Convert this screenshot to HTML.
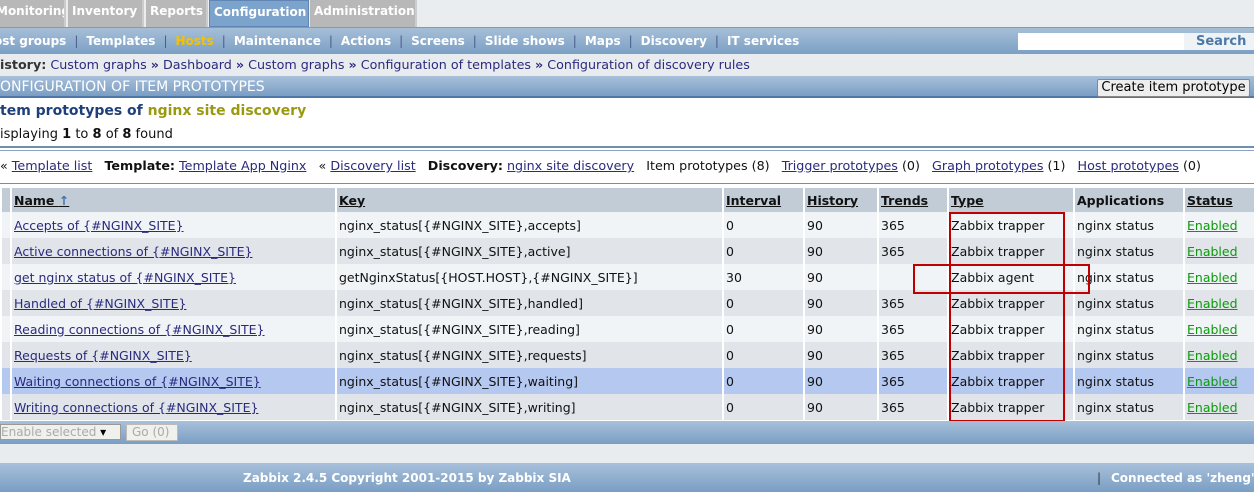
<!DOCTYPE html>
<html><head><style>
*{margin:0;padding:0;box-sizing:border-box}
body{width:1254px;height:492px;overflow:hidden;background:#fff;font-family:"DejaVu Sans","Liberation Sans",sans-serif;font-size:12px;color:#111;position:relative}
.abs{position:absolute;white-space:nowrap}
a{color:#2a2a7e;text-decoration:underline}
.tabs{top:0;left:0;width:1254px;height:27px;background:#eaedf0}
.tab{position:absolute;top:0;height:27px;background:#b8b8b8;color:#fff;font-weight:bold;font-size:12px;line-height:23px;padding-left:4px;border-right:2px solid #ccc;overflow:hidden}
.sub{top:27px;left:0;width:1254px;height:27px;background:linear-gradient(#a6bfd8,#7b9fc4);border-top:1px solid #7d9cbd;color:#fff;font-weight:bold;font-size:12px;line-height:26px}
.sub span{margin:0 4px}
.sep{color:#4a5c8a;font-weight:normal}
.hist{top:54px;left:0;width:1254px;height:22px;background:#e9ecef;line-height:22px;font-size:12.7px;color:#2a2a7e}
.ttl{top:76px;left:0;width:1254px;height:22px;background:linear-gradient(#a8c0da,#7a9ec4);color:#fff;font-size:14px;line-height:22px;border-bottom:2px solid #4f77a8}
table{position:absolute;top:188px;left:0;border-collapse:separate;border-spacing:2px 0;font-size:12.5px;table-layout:fixed;width:1264px}
td,th{height:26px;padding:0 2px;text-align:left;vertical-align:middle;white-space:nowrap;overflow:hidden}
th{background:#c1ccd6;text-decoration:underline;height:24px}
tr.o td{background:#f1f4f7}
tr.e td{background:#e1e5ea}
tr.h td{background:#b5c8f0}
.en{color:#0a9a0a}
</style></head><body>
<div class="abs tabs">
<div class="tab" style="left:-8px;width:74px">Monitoring</div>
<div class="tab" style="left:68px;width:76px">Inventory</div>
<div class="tab" style="left:146px;width:62px">Reports</div>
<div class="tab" style="left:209px;width:100px;background:#7ca3cb;border:1px solid #5f86b5">Configuration</div>
<div class="tab" style="left:310px;width:107px">Administration</div>
</div>
<div class="abs sub"><span style="margin-left:-6px">ost groups</span><span class="sep">|</span><span>Templates</span><span class="sep">|</span><span style="color:#f5c200">Hosts</span><span class="sep">|</span><span>Maintenance</span><span class="sep">|</span><span>Actions</span><span class="sep">|</span><span>Screens</span><span class="sep">|</span><span>Slide shows</span><span class="sep">|</span><span>Maps</span><span class="sep">|</span><span>Discovery</span><span class="sep">|</span><span>IT services</span></div>
<div class="abs" style="top:33px;left:1018px;width:166px;height:17px;background:#fff"></div>
<div class="abs" style="top:33px;left:1184px;width:70px;height:17px;background:#f0f3f6;color:#4a78a8;font-weight:bold;font-size:13px;line-height:17px;padding-left:12px">Search</div>
<div class="abs hist"><b style="color:#333">istory:</b> Custom graphs <b>»</b> Dashboard <b>»</b> Custom graphs <b>»</b> Configuration of templates <b>»</b> Configuration of discovery rules</div>
<div class="abs ttl">ONFIGURATION OF ITEM PROTOTYPES</div>
<div class="abs" style="top:79px;left:1097px;width:153px;height:18px;background:#eee;border:1px solid #888;border-radius:2px;font-size:13px;line-height:16px;text-align:center;color:#000">Create item prototype</div>
<div class="abs" style="top:103px;left:0;font-size:14px;font-weight:bold;color:#1f3f7a">tem prototypes of <span style="color:#9a9a12">nginx site discovery</span></div>
<div class="abs" style="top:127px;left:0;font-size:13px">isplaying <b>1</b> to <b>8</b> of <b>8</b> found</div>
<div class="abs" style="top:146px;left:0;width:1254px;height:5px;border-top:2px solid #6f8fb3;border-bottom:1px solid #8aa4c2"></div>
<div class="abs" style="top:158px;left:0;font-size:12.7px">« <a>Template list</a> &nbsp; <b>Template:</b> <a>Template App Nginx</a> &nbsp; « <a>Discovery list</a> &nbsp; <b>Discovery:</b> <a>nginx site discovery</a> &nbsp; Item prototypes (8) &nbsp; <a>Trigger prototypes</a> (0) &nbsp; <a>Graph prototypes</a> (1) &nbsp; <a>Host prototypes</a> (0)</div>
<div class="abs" style="top:183px;left:0;width:1254px;height:2px;border-top:1px solid #6f8fb3"></div>
<table>
<colgroup><col style="width:8px"><col style="width:323px"><col style="width:385px"><col style="width:79px"><col style="width:72px"><col style="width:68px"><col style="width:124px"><col style="width:108px"><col style="width:79px"></colgroup>
<tr><th style="padding:0"></th><th>Name <span style="color:#4a70b0;text-decoration:none">↑</span></th><th>Key</th><th>Interval</th><th>History</th><th>Trends</th><th>Type</th><th style="text-decoration:none">Applications</th><th>Status</th></tr>
<tr class="o"><td></td><td><a>Accepts of {#NGINX_SITE}</a></td><td>nginx_status[{#NGINX_SITE},accepts]</td><td>0</td><td>90</td><td>365</td><td>Zabbix trapper</td><td>nginx status</td><td><a class="en">Enabled</a></td></tr>
<tr class="e"><td></td><td><a>Active connections of {#NGINX_SITE}</a></td><td>nginx_status[{#NGINX_SITE},active]</td><td>0</td><td>90</td><td>365</td><td>Zabbix trapper</td><td>nginx status</td><td><a class="en">Enabled</a></td></tr>
<tr class="o"><td></td><td><a>get nginx status of {#NGINX_SITE}</a></td><td>getNginxStatus[{HOST.HOST},{#NGINX_SITE}]</td><td>30</td><td>90</td><td></td><td>Zabbix agent</td><td>nginx status</td><td><a class="en">Enabled</a></td></tr>
<tr class="e"><td></td><td><a>Handled of {#NGINX_SITE}</a></td><td>nginx_status[{#NGINX_SITE},handled]</td><td>0</td><td>90</td><td>365</td><td>Zabbix trapper</td><td>nginx status</td><td><a class="en">Enabled</a></td></tr>
<tr class="o"><td></td><td><a>Reading connections of {#NGINX_SITE}</a></td><td>nginx_status[{#NGINX_SITE},reading]</td><td>0</td><td>90</td><td>365</td><td>Zabbix trapper</td><td>nginx status</td><td><a class="en">Enabled</a></td></tr>
<tr class="e"><td></td><td><a>Requests of {#NGINX_SITE}</a></td><td>nginx_status[{#NGINX_SITE},requests]</td><td>0</td><td>90</td><td>365</td><td>Zabbix trapper</td><td>nginx status</td><td><a class="en">Enabled</a></td></tr>
<tr class="h"><td></td><td><a>Waiting connections of {#NGINX_SITE}</a></td><td>nginx_status[{#NGINX_SITE},waiting]</td><td>0</td><td>90</td><td>365</td><td>Zabbix trapper</td><td>nginx status</td><td><a class="en">Enabled</a></td></tr>
<tr class="e"><td></td><td><a>Writing connections of {#NGINX_SITE}</a></td><td>nginx_status[{#NGINX_SITE},writing]</td><td>0</td><td>90</td><td>365</td><td>Zabbix trapper</td><td>nginx status</td><td><a class="en">Enabled</a></td></tr>
</table>
<div class="abs" style="top:212px;left:949px;width:116px;height:210px;border:2px solid #c00000"></div>
<div class="abs" style="top:264px;left:913px;width:177px;height:30px;border:2px solid #c00000"></div>
<div class="abs" style="top:421px;left:0;width:1254px;height:23px;background:linear-gradient(#a8c0da,#7a9ec4)"></div>
<div class="abs" style="top:424px;left:0;width:121px;height:16px;background:#f0f0ec;border:1px solid #999;color:#aaa;font-size:12px;line-height:14px">Enable selected <span style="color:#000">▾</span></div>
<div class="abs" style="top:424px;left:126px;width:52px;height:17px;background:#f0f0ec;border:1px solid #bbb;color:#aaa;font-size:12px;line-height:15px;padding-left:5px">Go (0)</div>
<div class="abs" style="top:444px;left:0;width:1254px;height:19px;background:#e9ecef"></div>
<div class="abs" style="top:463px;left:0;width:1254px;height:29px;background:linear-gradient(#a8c0da,#7a9ec4);color:#fff;font-weight:bold;font-size:12px;line-height:30px"><span style="position:absolute;left:243px">Zabbix 2.4.5 Copyright 2001-2015 by Zabbix SIA</span><span style="position:absolute;left:1097px;color:#333;font-weight:normal">|</span><span style="position:absolute;left:1111px">Connected as 'zheng'</span></div>
</body></html>
